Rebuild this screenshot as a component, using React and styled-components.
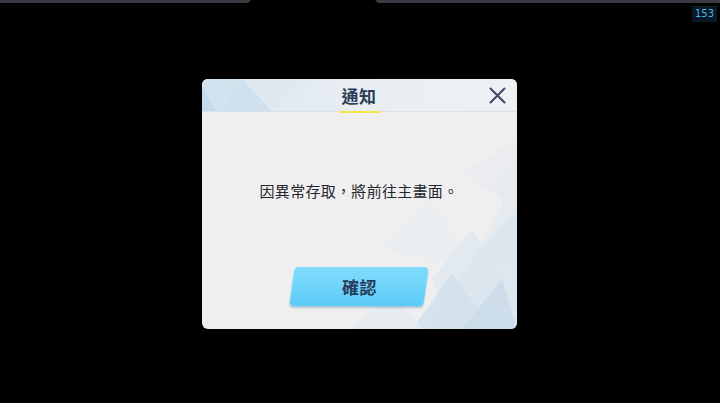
import styled, { createGlobalStyle } from "styled-components";

const GlobalStyle = createGlobalStyle`
  html, body {
    margin: 0;
    padding: 0;
    background: #000;
  }
  body {
    font-family: "Noto Sans CJK TC", "Noto Sans", sans-serif;
  }
`;

const Screen = styled.div`
  width: 720px;
  height: 403px;
  background: #000;
  position: relative;
  overflow: hidden;
  display: flex;
  flex-direction: column;
`;

const TopStrip = styled.div`
  display: flex;
  justify-content: space-between;
  height: 3px;
`;

const TopBar = styled.div`
  height: 3px;
  width: ${({ $w }) => $w}px;
  background: #3a3a42;
  clip-path: ${({ $side }) =>
    $side === "left"
      ? "polygon(0 0, 100% 0, calc(100% - 3px) 100%, 0 100%)"
      : "polygon(0 0, 100% 0, 100% 100%, 3px 100%)"};
`;

const Fps = styled.div`
  position: absolute;
  top: 6px;
  right: 3px;
  padding: 2px 3px;
  background: #0a1826;
  color: #4cb8e8;
  font-family: "DejaVu Sans", sans-serif;
  font-size: 10px;
  line-height: 12px;
`;

const Stage = styled.div`
  flex: 1;
  display: flex;
  justify-content: center;
  align-items: flex-start;
  padding-top: 76px;
  padding-right: 2px;
`;

const Dialog = styled.div`
  position: relative;
  width: 315px;
  height: 250px;
  border-radius: 6px;
  overflow: hidden;
  background: #efefef;
  display: flex;
  flex-direction: column;
`;

const Pattern = styled.svg`
  position: absolute;
  inset: 0;
  pointer-events: none;
`;

const Header = styled.div`
  position: relative;
  height: 32px;
  display: flex;
  align-items: center;
  justify-content: center;
  border-bottom: 1px solid #dce1e5;
`;

const Title = styled.div`
  position: relative;
  font-size: 17px;
  font-weight: 700;
  color: #2b3c58;
  letter-spacing: 0.5px;
  padding: 0 2px;
  &::after {
    content: "";
    position: absolute;
    left: -1px;
    right: -1px;
    bottom: -5px;
    height: 2px;
    background: #f2e64a;
    border-radius: 1px;
  }
`;

const Close = styled.button`
  position: absolute;
  right: 9px;
  top: 6px;
  width: 20px;
  height: 20px;
  padding: 0;
  border: none;
  background: none;
  display: flex;
  align-items: center;
  justify-content: center;
`;

const Body = styled.div`
  position: relative;
  flex: 1;
  display: flex;
  flex-direction: column;
  align-items: center;
  padding-top: 68px;
`;

const Message = styled.div`
  font-size: 15px;
  font-weight: 400;
  color: #25272e;
  line-height: 22px;
  letter-spacing: 0.3px;
`;

const ConfirmButton = styled.button`
  margin-top: 65px;
  width: 134px;
  height: 39px;
  border: none;
  border-radius: 4px;
  transform: skewX(-8deg);
  background: linear-gradient(180deg, #80dcfd 0%, #5ecbf7 100%);
  box-shadow: 0 2px 2px rgba(40, 120, 170, 0.35);
  display: flex;
  align-items: center;
  justify-content: center;
  span {
    transform: skewX(8deg);
    font-family: "Noto Sans CJK TC", sans-serif;
    font-size: 17px;
    font-weight: 700;
    color: #2a3d5c;
    letter-spacing: 0.5px;
  }
`;

export default function App() {
  return (
    <Screen>
      <GlobalStyle />
      <TopStrip>
        <TopBar $w={251} $side="left" />
        <TopBar $w={345} $side="right" />
      </TopStrip>
      <Fps>153</Fps>
      <Stage>
        <Dialog>
          <Pattern width="315" height="250" viewBox="0 0 315 250">
            <defs>
              <linearGradient id="hdr" x1="0" x2="1" y1="0" y2="0">
                <stop offset="0" stopColor="#d8e6f0" />
                <stop offset="0.35" stopColor="#e6edf2" />
                <stop offset="1" stopColor="#eef1f4" />
              </linearGradient>
            </defs>
            <rect x="0" y="0" width="315" height="32" fill="url(#hdr)" />
            <polygon points="0,0 40,0 20,32 0,32" fill="#cfe1ee" opacity="0.8" />
            <polygon points="20,32 40,0 70,32" fill="#c7dcec" opacity="0.7" />
            <polygon points="40,0 110,0 70,32" fill="#dde8f0" opacity="0.8" />
            <polygon points="70,32 110,0 140,32" fill="#e3ebf1" opacity="0.6" />
            <polygon points="0,8 14,32 0,32" fill="#bcd6ea" opacity="0.6" />
            <g opacity="0.7">
              <polygon points="315,60 315,130 260,95" fill="#e6ebf0" opacity="0.7" />
              <polygon points="315,100 270,180 315,180" fill="#dfe8ef" opacity="0.8" />
              <polygon points="180,170 230,120 270,190" fill="#e8edf1" opacity="0.8" />
              <polygon points="230,200 270,150 315,230 250,250" fill="#dce7ef" opacity="0.9" />
              <polygon points="270,180 315,130 315,250 230,250" fill="#d3e2ed" opacity="0.9" />
              <polygon points="210,250 250,195 290,250" fill="#c9dcea" opacity="0.9" />
              <polygon points="260,250 300,200 315,250" fill="#bcd4e6" opacity="0.9" />
              <polygon points="150,250 190,215 220,250" fill="#e3eaf0" opacity="0.8" />
              <polygon points="290,110 315,80 315,140" fill="#e2e9ef" opacity="0.7" />
            </g>
          </Pattern>
          <Header>
            <Title>通知</Title>
            <Close aria-label="close">
              <svg width="17" height="17" viewBox="0 0 17 17">
                <path
                  d="M1.5 1.5 L15.5 15.5 M15.5 1.5 L1.5 15.5"
                  stroke="#3a4a62"
                  strokeWidth="2"
                  strokeLinecap="round"
                />
              </svg>
            </Close>
          </Header>
          <Body>
            <Message>因異常存取，將前往主畫面。</Message>
            <ConfirmButton>
              <span>確認</span>
            </ConfirmButton>
          </Body>
        </Dialog>
      </Stage>
    </Screen>
  );
}
